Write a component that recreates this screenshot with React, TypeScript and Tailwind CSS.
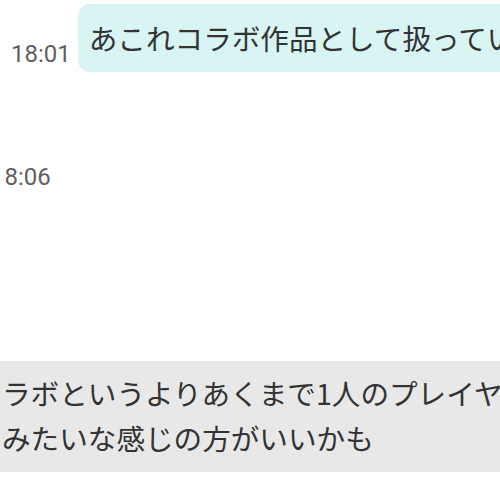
import React from "react";

export default function App() {
  return (
    <div className="relative w-[500px] h-[500px] overflow-hidden bg-white">
      <div className="flex flex-col">
        <div className="flex items-end pt-[4px]">
          <div className="ml-[11px] mb-[4px] font-['Roboto','Liberation_Sans',sans-serif] text-[24px] leading-[28px] text-[#5f5f5f] whitespace-nowrap">
            18:01
          </div>
          <div className="ml-[7px] shrink-0 rounded-[12px] bg-[#d9f5f3] pl-[11px] pr-[20px] py-[14px] font-['Noto_Sans_CJK_JP','Noto_Sans',sans-serif] text-[28.6px] leading-[40px] text-[#333333] whitespace-nowrap">
            あこれコラボ作品として扱ってい
          </div>
        </div>
        <div className="ml-[-9px] mt-[91px] font-['Roboto','Liberation_Sans',sans-serif] text-[24px] leading-[28px] text-[#5f5f5f] whitespace-nowrap">
          18:06
        </div>
        <div className="mt-[170px] ml-[-20px] w-[560px] shrink-0 rounded-[12px] bg-[#e8e8e8] pl-[22px] pt-[9px] pb-[12px] font-['Noto_Sans_CJK_JP','Noto_Sans',sans-serif] text-[28.6px] leading-[45px] text-[#333333]">
          <div className="whitespace-nowrap">ラボというよりあくまで1人のプレイヤー</div>
          <div className="whitespace-nowrap">みたいな感じの方がいいかも</div>
        </div>
      </div>
    </div>
  );
}
